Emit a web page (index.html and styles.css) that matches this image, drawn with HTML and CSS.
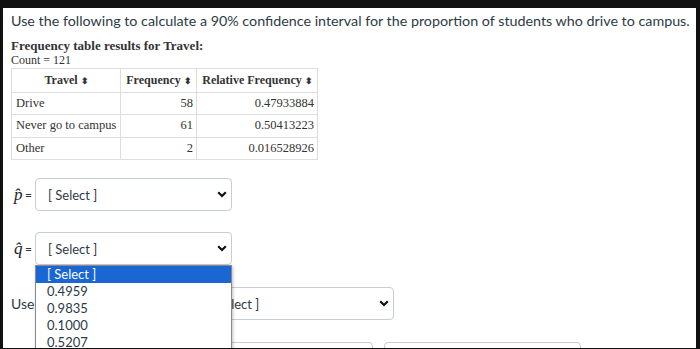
FILE: index.html
```html
<!DOCTYPE html>
<html lang="en">
<head>
    <meta charset="UTF-8">
    <title>Confidence Interval Question</title>
    <link rel="stylesheet" href="styles.css">
</head>
<body>
    <div class="page">
        <p class="question">Use the following to calculate a 90% confidence interval for the proportion of students who drive to campus.</p>

        <!-- Frequency table -->
        <div class="freq">
            <div class="freq-title">Frequency table results for Travel:</div>
            <div class="freq-count">Count = 121</div>
            <table>
                <thead>
                    <tr>
                        <th class="c1">Travel <span class="sort">&#x2B0D;</span></th>
                        <th class="c2">Frequency <span class="sort">&#x2B0D;</span></th>
                        <th class="c3">Relative Frequency <span class="sort">&#x2B0D;</span></th>
                    </tr>
                </thead>
                <tbody>
                    <tr><td>Drive</td><td class="num">58</td><td class="num">0.47933884</td></tr>
                    <tr><td>Never go to campus</td><td class="num">61</td><td class="num">0.50413223</td></tr>
                    <tr><td>Other</td><td class="num">2</td><td class="num">0.016528926</td></tr>
                </tbody>
            </table>
        </div>

        <!-- Answer rows -->
        <div class="answer-row">
            <span class="var">p&#770;</span><span class="eq">=</span>
            <div class="select">[ Select ]<span class="chev"><svg width="10" height="7" viewBox="0 0 10 7"><path d="M1.2 1.2 L5 5 L8.8 1.2" fill="none" stroke="#111" stroke-width="2.2"/></svg></span></div>
        </div>

        <div class="answer-row q-row">
            <span class="var">q&#770;</span><span class="eq">=</span>
            <div class="select">[ Select ]<span class="chev"><svg width="10" height="7" viewBox="0 0 10 7"><path d="M1.2 1.2 L5 5 L8.8 1.2" fill="none" stroke="#111" stroke-width="2.2"/></svg></span></div>

            <!-- open dropdown list -->
            <ul class="dropdown">
                <li class="active">[ Select ]</li>
                <li>0.4959</li>
                <li>0.9835</li>
                <li>0.1000</li>
                <li>0.5207</li>
            </ul>
        </div>

        <div class="use-row">
            <span class="use">Use</span>
            <div class="select">[ Select ]<span class="chev"><svg width="10" height="7" viewBox="0 0 10 7"><path d="M1.2 1.2 L5 5 L8.8 1.2" fill="none" stroke="#111" stroke-width="2.2"/></svg></span></div>
        </div>

        <div class="interval-row">
            <div class="box"></div>
            <div class="box"></div>
        </div>
    </div>
</body>
</html>
```

FILE: styles.css
```css
body {
    margin: 0;
    background-color: #111;
    font-family: Lato, "Open Sans", sans-serif;
    color: #2d3b45;
}
.page {
    margin: 8px 4px 1px 3px;
    height: 340px;
    background-color: white;
    padding: 0 8px;
    overflow: hidden;
}
.question {
    margin: 0;
    padding-top: 4px;
    font-size: 14.3px;
    line-height: 18px;
    white-space: nowrap;
}
/* Frequency table */
.freq {
    margin-top: 9px;
    font-family: "Liberation Serif", serif;
    color: #333;
}
.freq-title {
    font-weight: bold;
    font-size: 13px;
    line-height: 14px;
}
.freq-count {
    font-size: 12px;
    line-height: 14px;
}
table {
    border-collapse: collapse;
    font-size: 12.5px;
    margin-top: 1px;
}
th, td {
    border: 1px solid #ddd;
    padding: 0 3px 0 4px;
    height: 21.5px;
    color: #333;
    white-space: nowrap;
}
th {
    text-align: center;
    height: 22.5px;
    font-size: 12px;
}
th.c1 { width: 101px; }
th.c2 { width: 68px; }
th.c3 { width: 113px; }
td.num {
    text-align: right;
}
.sort {
    font-size: 9px;
    color: #333;
}
/* Answer rows */
.answer-row {
    display: flex;
    align-items: center;
    margin-top: 18px;
    position: relative;
}
.q-row {
    margin-top: 21px;
}
.var {
    font-family: "Liberation Serif", serif;
    font-style: italic;
    font-size: 17px;
    width: 11px;
    padding-left: 3px;
    color: #222;
}
.eq {
    font-size: 12px;
    width: 10px;
    color: #333;
}
.select {
    box-sizing: border-box;
    width: 197px;
    height: 33px;
    border: 1px solid #c7cdd1;
    border-radius: 4px;
    display: flex;
    align-items: center;
    padding-left: 12px;
    font-size: 13px;
    color: #2d3b45;
    background: white;
}
.chev {
    margin-left: auto;
    margin-right: 4px;
    display: flex;
}
.dropdown {
    position: absolute;
    left: 24px;
    top: 33px;
    width: 197px;
    box-sizing: border-box;
    margin: 0;
    padding: 0;
    list-style: none;
    background: white;
    border: 1px solid #8a8a8a;
    box-shadow: 1px 1px 3px rgba(0, 0, 0, 0.25);
    z-index: 5;
    font-size: 13px;
}
.dropdown li {
    height: 17px;
    line-height: 17px;
    padding-left: 11px;
    color: #2d3b45;
}
.dropdown li.active {
    background-color: #1a66d2;
    color: white;
}
.use-row {
    display: flex;
    align-items: center;
    margin-top: 22px;
}
.use {
    font-size: 14px;
    width: 186px;
}
.interval-row {
    display: flex;
    gap: 11px;
    margin-top: 22px;
    padding-left: 165px;
}
.box {
    width: 197px;
    height: 33px;
    box-sizing: border-box;
    border: 1px solid #c7cdd1;
    border-radius: 4px;
}
```
